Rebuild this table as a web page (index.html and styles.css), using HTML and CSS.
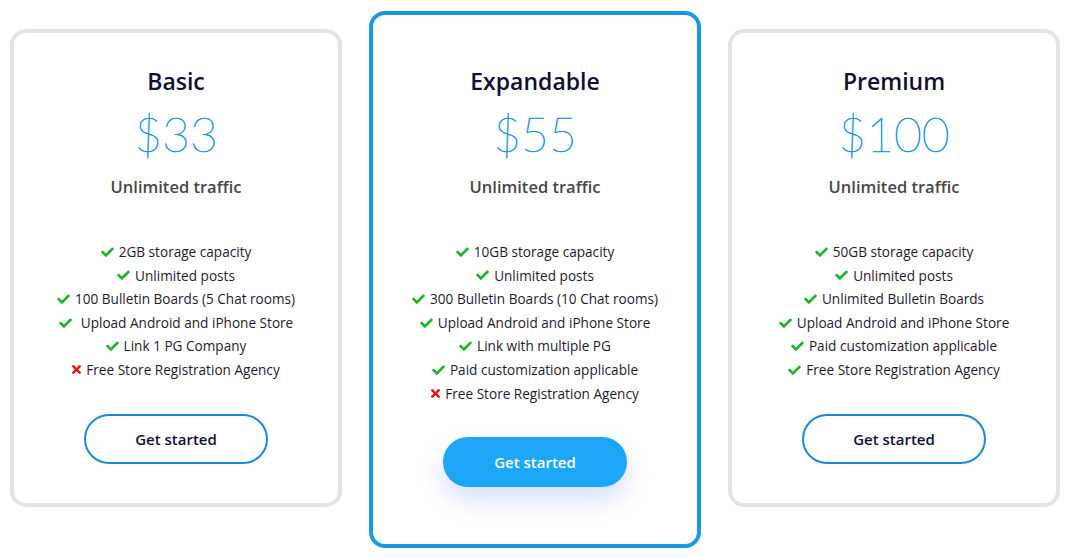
FILE: index.html
```html
<!DOCTYPE html>
<html>
<head>
<meta charset="utf-8">
<link rel="stylesheet" href="styles.css">
</head>
<body>
<div class="plans">
  <div class="card">
    <h2 class="title">Basic</h2>
    <div class="price">$33</div>
    <div class="traffic">Unlimited traffic</div>
    <ul class="features">
      <li><svg class="ok" viewBox="0 0 512 400"><path d="M173.9 391.4l-166.4-166.4c-10-10-10-26.2 0-36.2l36.2-36.2c10-10 26.2-10 36.2 0L192 264.7 432.1 24.6c10-10 26.2-10 36.2 0l36.2 36.2c10 10 10 26.2 0 36.2l-294.4 294.4c-10 10-26.2 10-36.2 0z"/></svg>2GB storage capacity</li>
      <li><svg class="ok" viewBox="0 0 512 400"><path d="M173.9 391.4l-166.4-166.4c-10-10-10-26.2 0-36.2l36.2-36.2c10-10 26.2-10 36.2 0L192 264.7 432.1 24.6c10-10 26.2-10 36.2 0l36.2 36.2c10 10 10 26.2 0 36.2l-294.4 294.4c-10 10-26.2 10-36.2 0z"/></svg>Unlimited posts</li>
      <li><svg class="ok" viewBox="0 0 512 400"><path d="M173.9 391.4l-166.4-166.4c-10-10-10-26.2 0-36.2l36.2-36.2c10-10 26.2-10 36.2 0L192 264.7 432.1 24.6c10-10 26.2-10 36.2 0l36.2 36.2c10 10 10 26.2 0 36.2l-294.4 294.4c-10 10-26.2 10-36.2 0z"/></svg>100 Bulletin Boards (5 Chat rooms)</li>
      <li class="wide"><svg class="ok" viewBox="0 0 512 400"><path d="M173.9 391.4l-166.4-166.4c-10-10-10-26.2 0-36.2l36.2-36.2c10-10 26.2-10 36.2 0L192 264.7 432.1 24.6c10-10 26.2-10 36.2 0l36.2 36.2c10 10 10 26.2 0 36.2l-294.4 294.4c-10 10-26.2 10-36.2 0z"/></svg>Upload Android and iPhone Store</li>
      <li><svg class="ok" viewBox="0 0 512 400"><path d="M173.9 391.4l-166.4-166.4c-10-10-10-26.2 0-36.2l36.2-36.2c10-10 26.2-10 36.2 0L192 264.7 432.1 24.6c10-10 26.2-10 36.2 0l36.2 36.2c10 10 10 26.2 0 36.2l-294.4 294.4c-10 10-26.2 10-36.2 0z"/></svg>Link 1 PG Company</li>
      <li><svg class="no" viewBox="0 0 352 352"><path d="M242.7 176l100.1-100.1c12.3-12.3 12.3-32.2 0-44.5l-22.2-22.2c-12.3-12.3-32.2-12.3-44.5 0L176 109.3 75.9 9.2c-12.3-12.3-32.2-12.3-44.5 0L9.2 31.4c-12.3 12.3-12.3 32.2 0 44.5L109.3 176 9.2 276.1c-12.3 12.3-12.3 32.2 0 44.5l22.2 22.2c12.3 12.3 32.2 12.3 44.5 0L176 242.7l100.1 100.1c12.3 12.3 32.2 12.3 44.5 0l22.2-22.2c12.3-12.3 12.3-32.2 0-44.5z"/></svg>Free Store Registration Agency</li>
    </ul>
    <a class="btn">Get started</a>
  </div>

  <div class="card featured">
    <h2 class="title">Expandable</h2>
    <div class="price">$55</div>
    <div class="traffic">Unlimited traffic</div>
    <ul class="features">
      <li><svg class="ok" viewBox="0 0 512 400"><path d="M173.9 391.4l-166.4-166.4c-10-10-10-26.2 0-36.2l36.2-36.2c10-10 26.2-10 36.2 0L192 264.7 432.1 24.6c10-10 26.2-10 36.2 0l36.2 36.2c10 10 10 26.2 0 36.2l-294.4 294.4c-10 10-26.2 10-36.2 0z"/></svg>10GB storage capacity</li>
      <li><svg class="ok" viewBox="0 0 512 400"><path d="M173.9 391.4l-166.4-166.4c-10-10-10-26.2 0-36.2l36.2-36.2c10-10 26.2-10 36.2 0L192 264.7 432.1 24.6c10-10 26.2-10 36.2 0l36.2 36.2c10 10 10 26.2 0 36.2l-294.4 294.4c-10 10-26.2 10-36.2 0z"/></svg>Unlimited posts</li>
      <li><svg class="ok" viewBox="0 0 512 400"><path d="M173.9 391.4l-166.4-166.4c-10-10-10-26.2 0-36.2l36.2-36.2c10-10 26.2-10 36.2 0L192 264.7 432.1 24.6c10-10 26.2-10 36.2 0l36.2 36.2c10 10 10 26.2 0 36.2l-294.4 294.4c-10 10-26.2 10-36.2 0z"/></svg>300 Bulletin Boards (10 Chat rooms)</li>
      <li><svg class="ok" viewBox="0 0 512 400"><path d="M173.9 391.4l-166.4-166.4c-10-10-10-26.2 0-36.2l36.2-36.2c10-10 26.2-10 36.2 0L192 264.7 432.1 24.6c10-10 26.2-10 36.2 0l36.2 36.2c10 10 10 26.2 0 36.2l-294.4 294.4c-10 10-26.2 10-36.2 0z"/></svg>Upload Android and iPhone Store</li>
      <li><svg class="ok" viewBox="0 0 512 400"><path d="M173.9 391.4l-166.4-166.4c-10-10-10-26.2 0-36.2l36.2-36.2c10-10 26.2-10 36.2 0L192 264.7 432.1 24.6c10-10 26.2-10 36.2 0l36.2 36.2c10 10 10 26.2 0 36.2l-294.4 294.4c-10 10-26.2 10-36.2 0z"/></svg>Link with multiple PG</li>
      <li><svg class="ok" viewBox="0 0 512 400"><path d="M173.9 391.4l-166.4-166.4c-10-10-10-26.2 0-36.2l36.2-36.2c10-10 26.2-10 36.2 0L192 264.7 432.1 24.6c10-10 26.2-10 36.2 0l36.2 36.2c10 10 10 26.2 0 36.2l-294.4 294.4c-10 10-26.2 10-36.2 0z"/></svg>Paid customization applicable</li>
      <li><svg class="no" viewBox="0 0 352 352"><path d="M242.7 176l100.1-100.1c12.3-12.3 12.3-32.2 0-44.5l-22.2-22.2c-12.3-12.3-32.2-12.3-44.5 0L176 109.3 75.9 9.2c-12.3-12.3-32.2-12.3-44.5 0L9.2 31.4c-12.3 12.3-12.3 32.2 0 44.5L109.3 176 9.2 276.1c-12.3 12.3-12.3 32.2 0 44.5l22.2 22.2c12.3 12.3 32.2 12.3 44.5 0L176 242.7l100.1 100.1c12.3 12.3 32.2 12.3 44.5 0l22.2-22.2c12.3-12.3 12.3-32.2 0-44.5z"/></svg>Free Store Registration Agency</li>
    </ul>
    <a class="btn primary">Get started</a>
  </div>

  <div class="card">
    <h2 class="title">Premium</h2>
    <div class="price">$100</div>
    <div class="traffic">Unlimited traffic</div>
    <ul class="features">
      <li><svg class="ok" viewBox="0 0 512 400"><path d="M173.9 391.4l-166.4-166.4c-10-10-10-26.2 0-36.2l36.2-36.2c10-10 26.2-10 36.2 0L192 264.7 432.1 24.6c10-10 26.2-10 36.2 0l36.2 36.2c10 10 10 26.2 0 36.2l-294.4 294.4c-10 10-26.2 10-36.2 0z"/></svg>50GB storage capacity</li>
      <li><svg class="ok" viewBox="0 0 512 400"><path d="M173.9 391.4l-166.4-166.4c-10-10-10-26.2 0-36.2l36.2-36.2c10-10 26.2-10 36.2 0L192 264.7 432.1 24.6c10-10 26.2-10 36.2 0l36.2 36.2c10 10 10 26.2 0 36.2l-294.4 294.4c-10 10-26.2 10-36.2 0z"/></svg>Unlimited posts</li>
      <li><svg class="ok" viewBox="0 0 512 400"><path d="M173.9 391.4l-166.4-166.4c-10-10-10-26.2 0-36.2l36.2-36.2c10-10 26.2-10 36.2 0L192 264.7 432.1 24.6c10-10 26.2-10 36.2 0l36.2 36.2c10 10 10 26.2 0 36.2l-294.4 294.4c-10 10-26.2 10-36.2 0z"/></svg>Unlimited Bulletin Boards</li>
      <li><svg class="ok" viewBox="0 0 512 400"><path d="M173.9 391.4l-166.4-166.4c-10-10-10-26.2 0-36.2l36.2-36.2c10-10 26.2-10 36.2 0L192 264.7 432.1 24.6c10-10 26.2-10 36.2 0l36.2 36.2c10 10 10 26.2 0 36.2l-294.4 294.4c-10 10-26.2 10-36.2 0z"/></svg>Upload Android and iPhone Store</li>
      <li><svg class="ok" viewBox="0 0 512 400"><path d="M173.9 391.4l-166.4-166.4c-10-10-10-26.2 0-36.2l36.2-36.2c10-10 26.2-10 36.2 0L192 264.7 432.1 24.6c10-10 26.2-10 36.2 0l36.2 36.2c10 10 10 26.2 0 36.2l-294.4 294.4c-10 10-26.2 10-36.2 0z"/></svg>Paid customization applicable</li>
      <li><svg class="ok" viewBox="0 0 512 400"><path d="M173.9 391.4l-166.4-166.4c-10-10-10-26.2 0-36.2l36.2-36.2c10-10 26.2-10 36.2 0L192 264.7 432.1 24.6c10-10 26.2-10 36.2 0l36.2 36.2c10 10 10 26.2 0 36.2l-294.4 294.4c-10 10-26.2 10-36.2 0z"/></svg>Free Store Registration Agency</li>
    </ul>
    <a class="btn">Get started</a>
  </div>
</div>
</body>
</html>
```

FILE: styles.css
```css
* { box-sizing: border-box; }

html, body {
  margin: 0;
  padding: 0;
  background: #ffffff;
}

body {
  font-family: "Open Sans", "Noto Sans", sans-serif;
  color: #1d1a2e;
}

.plans {
  display: flex;
  align-items: flex-start;
  gap: 27px;
  padding: 11px 10px 0 10px;
}

.card {
  width: 332px;
  flex: 0 0 332px;
  margin-top: 18px;
  border: 4px solid #e4e4e4;
  border-radius: 16px;
  background: #fff;
  display: flex;
  flex-direction: column;
  align-items: center;
  text-align: center;
  padding: 33px 0 39px;
}

.card.featured {
  margin-top: 0;
  border-color: #1a98e6;
  padding: 51px 0 57px;
}

.title {
  margin: 0;
  font-size: 23px;
  line-height: 31px;
  font-weight: 600;
  color: #140f30;
}

.price {
  margin-top: 9px;
  font-family: "Lato", "Open Sans", sans-serif;
  font-weight: 100;
  font-size: 48px;
  line-height: 56px;
  color: #1893e0;
  -webkit-text-stroke: 0.6px #1893e0;
}

.traffic {
  margin-top: 13px;
  font-size: 16.5px;
  line-height: 24px;
  font-weight: 600;
  color: #474747;
}

.features {
  list-style: none;
  margin: 41px 0 0;
  padding: 0;
  font-size: 13.6px;
  line-height: 23.6px;
  color: #1f1b2f;
}

.features li {
  display: flex;
  align-items: center;
  justify-content: center;
  gap: 5px;
  white-space: nowrap;
}

.features li.wide { gap: 9px; }

.ok {
  width: 13px;
  height: 10px;
  fill: #1fb328;
  flex: none;
}

.no {
  width: 9px;
  height: 9px;
  fill: #e01818;
  flex: none;
}

.btn {
  margin-top: 32px;
  width: 184px;
  height: 50px;
  border: 2px solid #1a8ad8;
  border-radius: 25px;
  display: flex;
  align-items: center;
  justify-content: center;
  font-size: 15px;
  font-weight: 600;
  color: #140f30;
  background: #fff;
}

.btn.primary {
  background: #1ea6f8;
  border-color: #1ea6f8;
  color: #fff;
  box-shadow: 0 12px 24px rgba(60, 110, 230, 0.22);
}
```
